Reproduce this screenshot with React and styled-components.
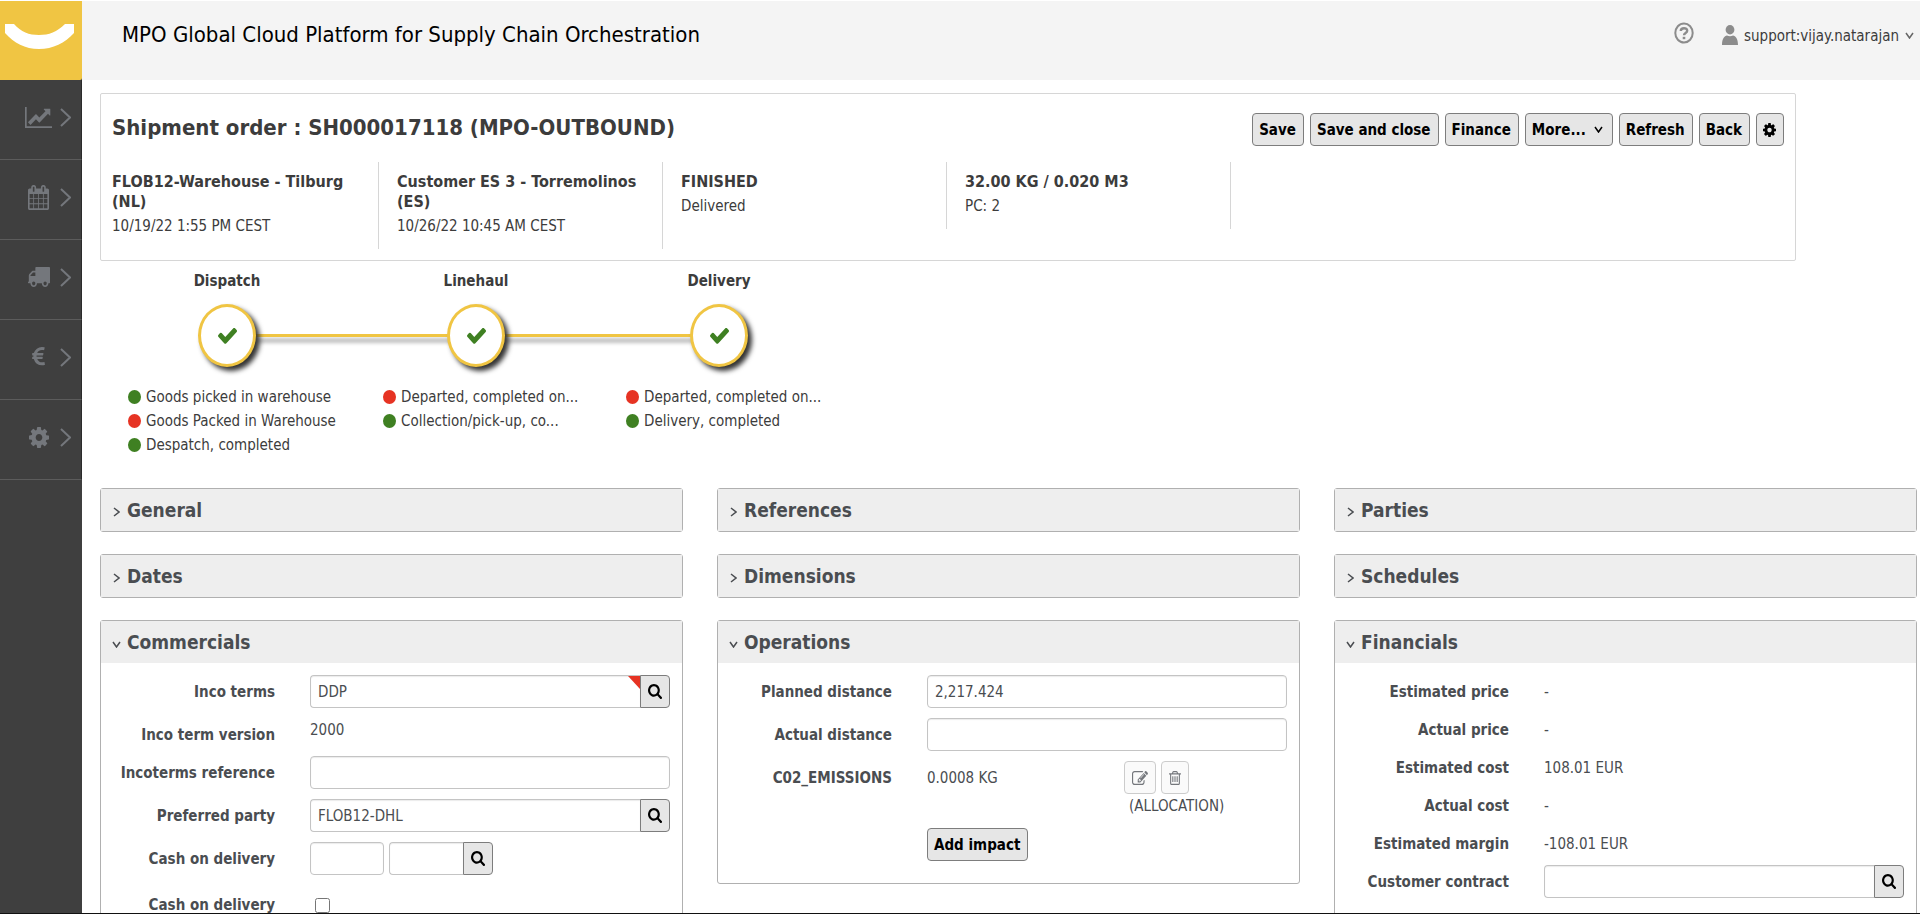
import React, { useState } from "react";
import styled, { createGlobalStyle } from "styled-components";

//FONT AWESOME 4 OUTLINES, EACH WITH THE BOX IT FILLS
const ICONS = {
  chart: {
    box: "0 128 2048 1536",
    d: "M2048 1536v128h-2048v-1536h128v1408h1920zM1920 288v435q0 21-19.5 29.5t-35.5-7.5l-121-121-633 633q-10 10-23 10t-23-10l-233-233-416 416-192-192 585-585q10-10 23-10t23 10l233 233 464-464-121-121q-16-16-7.5-35.5t29.5-19.5h435q14 0 23 9t9 23z",
  },
  calendar: {
    box: "64 0 1664 1792",
    d: "M192 1664h288v-288h-288v288zm352 0h320v-288h-320v288zm-352-352h288v-320h-288v320zm352 0h320v-320h-320v320zm-352-384h288v-288h-288v288zm736 736h320v-288h-320v288zm-384-736h320v-288h-320v288zm768 736h288v-288h-288v288zm-384-352h320v-320h-320v320zm-352-864v-288q0-13-9.5-22.5t-22.5-9.5h-64q-13 0-22.5 9.5t-9.5 22.5v288q0 13 9.5 22.5t22.5 9.5h64q13 0 22.5-9.5t9.5-22.5zm736 864h288v-320h-288v320zm-384-384h320v-288h-320v288zm384 0h288v-288h-288v288zm32-480v-288q0-13-9.5-22.5t-22.5-9.5h-64q-13 0-22.5 9.5t-9.5 22.5v288q0 13 9.5 22.5t22.5 9.5h64q13 0 22.5-9.5t9.5-22.5zm384-64v1280q0 52-38 90t-90 38h-1408q-52 0-90-38t-38-90v-1280q0-52 38-90t90-38h128v-96q0-66 47-113t113-47h64q66 0 113 47t47 113v96h384v-96q0-66 47-113t113-47h64q66 0 113 47t47 113v96h128q52 0 90 38t38 90z",
  },
  truck: {
    box: "64 256 1728 1408",
    d: "M640 1408q0-52-38-90t-90-38-90 38-38 90 38 90 90 38 90-38 38-90zm-384-512h384v-256h-158q-13 0-22 9l-195 195q-9 9-9 22v30zm1280 512q0-52-38-90t-90-38-90 38-38 90 38 90 90 38 90-38 38-90zm256-1088v1024q0 15-4 26.5t-13.5 18.5-16.5 11.5-23.5 6-22.5 2-25.5 0-22.5-.5q0 106-75 181t-181 75-181-75-75-181h-384q0 106-75 181t-181 75-181-75-75-181h-64q-3 0-22.5.5t-25.5 0-22.5-2-23.5-6-16.5-11.5-13.5-18.5-4-26.5q0-26 19-45t45-19v-320q0-8-.5-35t0-38 2.5-34.5 6.5-37 14-30.5 22.5-30l198-198q19-19 50.5-32t58.5-13h160v-192q0-26 19-45t45-19h1024q26 0 45 19t19 45z",
  },
  euro: {
    box: "370 128 1030 1536",
    d: "M1360 1307l35 159q3 12-3 22.5t-17 14.5l-5 1q-4 2-10.5 3.5t-16 4.5-21.5 5.5-25.5 5-30 5-33.5 4.5-36.5 3-38.5 1q-234 0-409-130.5t-238-351.5h-95q-13 0-22.5-9.5t-9.5-22.5v-113q0-13 9.5-22.5t22.5-9.5h66q-2-57 1-105h-67q-14 0-23-9t-9-23v-114q0-14 9-23t23-9h98q67-210 243.5-338t400.5-128q102 0 194 23 11 3 20 15 6 11 3 24l-43 159q-3 13-14 19.5t-24 2.5l-4-1q-4-1-11.5-2.5l-17.5-3.5-22.5-3.5-26-3-29-2.5-29.5-1q-126 0-226 64t-150 176h468q16 0 25 12 10 12 7 26l-24 114q-5 26-32 26h-488q-3 37 0 105h459q15 0 25 12 9 12 6 27l-24 112q-2 11-11 18.5t-20 7.5h-387q48 117 149.5 185.5t228.5 68.5q18 0 36-1.5t33.5-3.5 29.5-4.5 24.5-5 18.5-4.5l12-3 5-2q13-5 26 2 12 7 15 21z",
  },
  cog: {
    box: "128 128 1536 1536",
    d: "M1152 896q0-106-75-181t-181-75-181 75-75 181 75 181 181 75 181-75 75-181zm512-109v222q0 12-8 23t-20 13l-185 28q-19 54-39 91 35 50 107 138 10 12 10 25t-9 23q-27 37-99 108t-94 71q-12 0-26-9l-138-108q-44 23-91 38-16 136-29 186-7 28-36 28h-222q-14 0-24.5-8.5t-11.5-21.5l-28-184q-49-16-90-37l-141 107q-10 9-25 9-14 0-25-11-126-114-165-168-7-10-7-23 0-12 8-23 15-21 51-66.5t54-70.5q-27-50-41-99l-183-27q-13-2-21-12.5t-8-23.5v-222q0-12 8-23t19-13l186-28q14-46 39-92-40-57-107-138-10-12-10-24 0-10 9-23 26-36 98.5-107.5t94.5-71.5q13 0 26 10l138 107q44-23 91-38 16-136 29-186 7-28 36-28h222q14 0 24.5 8.5t11.5 21.5l28 184q49 16 90 37l142-107q9-9 24-9 13 0 25 10 129 119 165 170 7 8 7 22 0 12-8 23-15 21-51 66.5t-54 70.5q26 50 41 98l183 28q13 2 21 12.5t8 23.5z",
  },
  check: {
    box: "121 344 1550 1188",
    d: "M1671 566q0 40-28 68l-724 724-136 136q-28 28-68 28t-68-28l-136-136-362-362q-28-28-28-68t28-68l136-136q28-28 68-28t68 28l294 295 656-657q28-28 68-28t68 28l136 136q28 28 28 68z",
  },
  search: {
    box: "64 128 1664 1664",
    d: "M1216 832q0-185-131.5-316.5t-316.5-131.5-316.5 131.5-131.5 316.5 131.5 316.5 316.5 131.5 316.5-131.5 131.5-316.5zm512 832q0 52-38 90t-90 38q-54 0-90-38l-343-342q-179 124-399 124-143 0-273.5-55.5t-225-150-150-225-55.5-273.5 55.5-273.5 150-225 225-150 273.5-55.5 273.5 55.5 225 150 150 225 55.5 273.5q0 220-124 399l343 343q37 37 37 90z",
  },
  edit: {
    box: "0 128 1792 1408",
    d: "M888 1184l116-116-152-152-116 116v56h96v96h56zm440-720q-16-16-33 1l-350 350q-17 17-1 33t33-1l350-350q17-17 1-33zm80 594v190q0 119-84.5 203.5t-203.5 84.5h-832q-119 0-203.5-84.5t-84.5-203.5v-832q0-119 84.5-203.5t203.5-84.5h832q63 0 117 25 15 7 18 23 3 17-9 29l-49 49q-14 14-32 8-23-6-45-6h-832q-66 0-113 47t-47 113v832q0 66 47 113t113 47h832q66 0 113-47t47-113v-126q0-13 9-22l64-64q15-15 35-7t20 29zm-96-738l288 288-672 672h-288v-288zm444 132l-92 92-288-288 92-92q28-28 68-28t68 28l152 152q28 28 28 68t-28 68z",
  },
  trash: {
    box: "192 128 1408 1536",
    d: "M704 736v576q0 14-9 23t-23 9h-64q-14 0-23-9t-9-23v-576q0-14 9-23t23-9h64q14 0 23 9t9 23zm256 0v576q0 14-9 23t-23 9h-64q-14 0-23-9t-9-23v-576q0-14 9-23t23-9h64q14 0 23 9t9 23zm256 0v576q0 14-9 23t-23 9h-64q-14 0-23-9t-9-23v-576q0-14 9-23t23-9h64q14 0 23 9t9 23zm128 724v-948h-896v948q0 22 7 40.5t14.5 27 10.5 8.5h832q3 0 10.5-8.5t14.5-27 7-40.5zm-672-1076h448l-48-117q-7-9-17-11h-317q-10 2-17 11zm928 32v64q0 14-9 23t-23 9h-96v948q0 83-47 143.5t-113 60.5h-832q-66 0-113-58.5t-47-141.5v-952h-96q-14 0-23-9t-9-23v-64q0-14 9-23t23-9h309l70-167q15-37 54-63t79-26h320q40 0 79 26t54 63l70 167h309q14 0 23 9t9 23z",
  },
};

const Icon = ({ name, w, h }) => (
  <svg width={w} height={h} viewBox={ICONS[name].box} preserveAspectRatio="none" fill="currentColor" aria-hidden="true">
    <path d={ICONS[name].d} />
  </svg>
);

const Chevron = ({ down, w, h, stroke = 1.5 }) => (
  <svg width={w} height={h} viewBox={`0 0 ${w} ${h}`} fill="none" stroke="currentColor" strokeWidth={stroke} aria-hidden="true">
    <path d={down ? `M1 1L${w / 2} ${h - 1}L${w - 1} 1` : `M1 1L${w - 1} ${h / 2}L1 ${h - 1}`} />
  </svg>
);

const NAV = [
  { icon: "chart", label: "Analytics", w: 27, h: 21 },
  { icon: "calendar", label: "Planning", w: 21, h: 25 },
  { icon: "truck", label: "Transport", w: 22, h: 20 },
  { icon: "euro", label: "Finance", w: 13, h: 20 },
  { icon: "cog", label: "Settings", w: 20, h: 21 },
];

const SUMMARY = [
  { title: "FLOB12-Warehouse - Tilburg (NL)", sub: "10/19/22 1:55 PM CEST" },
  { title: "Customer ES 3 - Torremolinos (ES)", sub: "10/26/22 10:45 AM CEST" },
  { title: "FINISHED", sub: "Delivered" },
  { title: "32.00 KG / 0.020 M3", sub: "PC: 2" },
];

const STAGES = [
  {
    name: "Dispatch",
    events: [
      { text: "Goods picked in warehouse" },
      { text: "Goods Packed in Warehouse", late: true },
      { text: "Despatch, completed" },
    ],
  },
  {
    name: "Linehaul",
    events: [
      { text: "Departed, completed on...", late: true },
      { text: "Collection/pick-up, co..." },
    ],
  },
  {
    name: "Delivery",
    events: [
      { text: "Departed, completed on...", late: true },
      { text: "Delivery, completed" },
    ],
  },
];

const Panel = ({ title, defaultOpen = false, children }) => {
  const [open, setOpen] = useState(defaultOpen);
  return (
    <PanelBox>
      <PanelHeading>
        <PanelToggle type="button" aria-expanded={open} onClick={() => setOpen(!open)}>
          <PanelArrow>
            {open ? <Chevron down w={9} h={7} /> : <Chevron w={7} h={10} />}
          </PanelArrow>
          {title}
        </PanelToggle>
      </PanelHeading>
      {open && <PanelBody>{children}</PanelBody>}
    </PanelBox>
  );
};

const Lookup = ({ id, value = "", label, changed, small }) => (
  <LookupGroup $small={small}>
    <LookupInput id={id} aria-label={label} defaultValue={value} />
    {changed && <ChangedMark />}
    <LookupButton type="button" aria-label="Search">
      <Icon name="search" w={14} h={15} />
    </LookupButton>
  </LookupGroup>
);

const TextRow = ({ label, value }) => (
  <Row>
    <RowLabel as="span">{label}</RowLabel>
    <Value>{value}</Value>
  </Row>
);

const App = () => {
  return (
    <Page>
      <GlobalStyle />
      <Sidebar>
        <Logo href="#" aria-label="Home">
          <svg width="82" height="79" viewBox="0 1 82 79" aria-hidden="true">
            <path d="M5 24H14C21 32 29 35 39 35S57 32 65 24H74V33C65 43 53 49 39 49S14 43 5 33Z" fill="#fff" />
          </svg>
        </Logo>
        <nav>
          {NAV.map((item) => (
            <NavItem key={item.icon} type="button" aria-label={item.label}>
              <NavIcon><Icon name={item.icon} w={item.w} h={item.h} /></NavIcon>
              <Chevron w={11} h={19} stroke={2} />
            </NavItem>
          ))}
        </nav>
      </Sidebar>

      <Main>
        <TopBar>
          <AppTitle>MPO Global Cloud Platform for Supply Chain Orchestration</AppTitle>
          <TopActions>
            <HelpButton type="button" aria-label="Help">
              <svg width="20" height="22" viewBox="0 0 20 22" fill="none" stroke="currentColor" aria-hidden="true">
                <ellipse cx="10" cy="11" rx="8.7" ry="9.6" strokeWidth="2" />
                <path d="M6.8 9C6.8 5.3 13.2 5.3 13.2 8.7C13.2 11 10 10.8 10 13.2" strokeWidth="2.4" />
                <path d="M8.7 14.8H11.3V17.2H8.7Z" fill="currentColor" stroke="none" />
              </svg>
            </HelpButton>
            <UserMenu type="button">
              <svg width="16" height="20" viewBox="0 0 16 20" aria-hidden="true">
                <ellipse cx="8" cy="4.7" rx="4.4" ry="4.7" fill="#8c8c8c" />
                <path d="M0 20C0 13.500 2.500 11 5 10.600Q8 12 11 10.600C13.500 11 16 13.500 16 20Z" fill="#8c8c8c" />
              </svg>
              <UserName>support:vijay.natarajan</UserName>
              <Chevron down w={9} h={7} />
            </UserMenu>
          </TopActions>
        </TopBar>

        <Content>
          <Card>
            <CardTop>
              <CardTitle>Shipment order : SH000017118 (MPO-OUTBOUND)</CardTitle>
              <Toolbar>
                <Button type="button">Save</Button>
                <Button type="button">Save and close</Button>
                <Button type="button">Finance</Button>
                <Button type="button" $wide>More... <Chevron down w={9} h={7} /></Button>
                <Button type="button">Refresh</Button>
                <Button type="button">Back</Button>
                <Button type="button" aria-label="Settings"><Icon name="cog" w={13} h={14} /></Button>
              </Toolbar>
            </CardTop>
            <Summary>
              {SUMMARY.map((cell) => (
                <SummaryCell key={cell.title}>
                  <SummaryTitle>{cell.title}</SummaryTitle>
                  <SummaryText>{cell.sub}</SummaryText>
                </SummaryCell>
              ))}
            </Summary>
          </Card>

          <Timeline>
            {STAGES.map((stage) => (
              <Stage key={stage.name}>
                <StageName>{stage.name}</StageName>
                <StageTrack>
                  <StageCircle><Icon name="check" w={19} h={16} /></StageCircle>
                </StageTrack>
                <Events>
                  {stage.events.map((ev) => (
                    <Event key={ev.text}><Dot $late={ev.late} />{ev.text}</Event>
                  ))}
                </Events>
              </Stage>
            ))}
          </Timeline>

          <Panels>
            <PanelColumn>
              <Panel title="General" />
              <Panel title="Dates" />
              <Panel title="Commercials" defaultOpen>
                <Row>
                  <RowLabel htmlFor="inco-terms">Inco terms</RowLabel>
                  <Lookup id="inco-terms" value="DDP" changed />
                </Row>
                <Row>
                  <RowLabel as="span">Inco term version</RowLabel>
                  <Value $top>2000</Value>
                </Row>
                <Row>
                  <RowLabel htmlFor="inco-ref">Incoterms reference</RowLabel>
                  <Input id="inco-ref" />
                </Row>
                <Row>
                  <RowLabel htmlFor="party">Preferred party</RowLabel>
                  <Lookup id="party" value="FLOB12-DHL" />
                </Row>
                <Row>
                  <RowLabel htmlFor="cod-amount">Cash on delivery</RowLabel>
                  <Pair>
                    <Input id="cod-amount" $short />
                    <Lookup label="Cash on delivery currency" small />
                  </Pair>
                </Row>
                <Row>
                  <RowLabel htmlFor="cod" $low>Cash on delivery</RowLabel>
                  <Checkbox id="cod" type="checkbox" />
                </Row>
              </Panel>
            </PanelColumn>

            <PanelColumn>
              <Panel title="References" />
              <Panel title="Dimensions" />
              <Panel title="Operations" defaultOpen>
                <Row>
                  <RowLabel htmlFor="planned">Planned distance</RowLabel>
                  <Input id="planned" defaultValue="2,217.424" />
                </Row>
                <Row>
                  <RowLabel htmlFor="actual">Actual distance</RowLabel>
                  <Input id="actual" />
                </Row>
                <Row>
                  <RowLabel as="span">C02_EMISSIONS</RowLabel>
                  <Impact>
                    <Value>0.0008 KG</Value>
                    <div>
                      <ImpactActions>
                        <GhostButton type="button" aria-label="Edit impact"><Icon name="edit" w={16} h={14} /></GhostButton>
                        <GhostButton type="button" aria-label="Delete impact"><Icon name="trash" w={12} h={14} /></GhostButton>
                      </ImpactActions>
                      <ImpactNote>(ALLOCATION)</ImpactNote>
                    </div>
                  </Impact>
                </Row>
                <Row>
                  <span />
                  <div><Button type="button">Add impact</Button></div>
                </Row>
              </Panel>
            </PanelColumn>

            <PanelColumn>
              <Panel title="Parties" />
              <Panel title="Schedules" />
              <Panel title="Financials" defaultOpen>
                <TextRow label="Estimated price" value="-" />
                <TextRow label="Actual price" value="-" />
                <TextRow label="Estimated cost" value="108.01 EUR" />
                <TextRow label="Actual cost" value="-" />
                <TextRow label="Estimated margin" value="-108.01 EUR" />
                <Row>
                  <RowLabel htmlFor="contract">Customer contract</RowLabel>
                  <Lookup id="contract" />
                </Row>
              </Panel>
            </PanelColumn>
          </Panels>
        </Content>
      </Main>
    </Page>
  );
};

export default App;

const GlobalStyle = createGlobalStyle`
  * {
    box-sizing: border-box;
  }
  body {
    margin: 0;
    background: #fff;
    color: #3c3c3c;
  }
  body, button, input {
    font-family: "DejaVu Sans Condensed", Tahoma, "DejaVu Sans", sans-serif;
    font-size: 15px;
    line-height: 24px;
  }
  svg {
    display: block;
    flex: none;
  }
`

const Page = styled.div`
  display: flex;
  height: 100vh;
  overflow: hidden;
  padding-top: 1px;
  border-bottom: 1px solid #111;
`

const Sidebar = styled.aside`
  flex: none;
  width: 82px;
  background: #3f3f3f;
`

const Logo = styled.a`
  display: block;
  background: #f0c543;
  border-bottom-right-radius: 2px;
`

const NavItem = styled.button`
  display: flex;
  align-items: center;
  gap: 8px;
  width: 100%;
  height: 80px;
  padding: 0 0 5px 25px;
  background: none;
  border: 0;
  border-bottom: 1px solid #5c5c5c;
  border-right: 1px solid #2b2b2b;
  color: #74777c;
  cursor: pointer;
`

const NavIcon = styled.span`
  display: flex;
  justify-content: center;
  width: 27px;
`

const Main = styled.div`
  flex: 1;
  min-width: 0;
`

const TopBar = styled.header`
  display: flex;
  justify-content: space-between;
  height: 79px;
  padding: 18px 6px 0 40px;
  background: #f4f4f4;
`

const AppTitle = styled.h1`
  margin: 0;
  color: #000;
  font-size: 22px;
  font-weight: 400;
  line-height: 32px;
`

const TopActions = styled.div`
  display: flex;
  align-items: center;
  gap: 28px;
  height: 32px;
`

const HelpButton = styled.button`
  padding: 0 0 4px;
  background: none;
  border: 0;
  color: #8c8c8c;
`

const UserMenu = styled.button`
  display: flex;
  align-items: center;
  gap: 6px;
  padding: 0;
  background: none;
  border: 0;
  color: #666;
`

const UserName = styled.span`
  padding-top: 2px;
  color: #3c3c3c;
`

const Content = styled.main`
  padding: 13px 3px 0 18px;
`

const Card = styled.section`
  margin-right: 121px;
  padding: 19px 11px 11px;
  border: 1px solid #d6d6d6;
  border-radius: 2px;
`

const CardTop = styled.div`
  display: flex;
  justify-content: space-between;
`

const CardTitle = styled.h2`
  margin: 0;
  font-size: 22px;
  line-height: 30px;
`

const Toolbar = styled.div`
  display: flex;
  gap: 6px;
`

const Button = styled.button`
  display: flex;
  align-items: center;
  gap: 8px;
  height: 33px;
  padding: 0 ${(props) => (props.$wide ? "9px" : "7px")} 0 6px;
  background: #e6e6e6;
  border: 1px solid #7d7d7d;
  border-radius: 4px;
  color: #000;
  font-weight: 700;
  cursor: pointer;
`

const Summary = styled.div`
  display: flex;
  align-items: flex-start;
  margin-top: 16px;
`

const SummaryCell = styled.div`
  width: 284px;
  padding: 10px 14px 11px 18px;
  border-right: 1px solid #d6d6d6;
  &:first-child {
    width: 267px;
    padding-left: 0;
  }
`

const SummaryTitle = styled.div`
  font-size: 16px;
  font-weight: 700;
  line-height: 20px;
`

const SummaryText = styled.div`
  margin-top: 2px;
`

const Timeline = styled.section`
  display: grid;
  grid-template-columns: 198px 186px 186px;
  column-gap: 57px;
  padding: 8px 0 0 28px;
`

const StageName = styled.div`
  font-weight: 700;
  text-align: center;
`

const StageTrack = styled.div`
  position: relative;
  display: flex;
  justify-content: center;
  margin-top: 11px;
`

const StageCircle = styled.div`
  position: relative;
  z-index: 1;
  display: flex;
  align-items: center;
  justify-content: center;
  width: 58px;
  height: 63px;
  background: #fff;
  border: 3px solid #f0c543;
  border-radius: 50%;
  box-shadow: 4px 4px 5px #333;
  color: #3f8022;
`

//THE LINE RUNS BEHIND THE CIRCLES TO THE NEXT STAGE
const Stage = styled.div`
  &:not(:last-child) ${StageTrack}::after {
    content: "";
    position: absolute;
    top: 30px;
    left: 50%;
    width: calc(100% + 55px);
    height: 3px;
    background: #f0c543;
    box-shadow: 0 5px 4px rgba(0, 0, 0, 0.4);
  }
`

const Events = styled.ul`
  height: 72px;
  margin: 18px 0 0;
  padding: 0;
  list-style: none;
`

const Event = styled.li`
  display: flex;
  align-items: center;
  gap: 5px;
  white-space: nowrap;
`

const Dot = styled.span`
  flex: none;
  width: 13px;
  height: 14px;
  border-radius: 50%;
  background: ${(props) => (props.$late ? "#e63323" : "#3f8022")};
`

const Panels = styled.div`
  display: grid;
  grid-template-columns: repeat(3, 1fr);
  column-gap: 34px;
  margin-top: 31px;
  color: #4a4d51;
`

const PanelColumn = styled.div`
  display: flex;
  flex-direction: column;
  gap: 22px;
`

const PanelBox = styled.section`
  border: 1px solid #b0b0b0;
  border-radius: 3px;
`

const PanelHeading = styled.h3`
  margin: 0;
`

const PanelToggle = styled.button`
  display: flex;
  align-items: center;
  gap: 5px;
  width: 100%;
  height: 42px;
  padding: 0 10px;
  background: #eee;
  border: 0;
  color: #4a4d51;
  font-size: 19px;
  font-weight: 700;
  cursor: pointer;
`

const PanelArrow = styled.span`
  display: flex;
  justify-content: center;
  width: 11px;
  padding-top: 4px;
`

const PanelBody = styled.div`
  display: flex;
  flex-direction: column;
  gap: 10px;
  padding: 12px 12px 22px 0;
`

const Row = styled.div`
  display: grid;
  grid-template-columns: 174px 1fr;
  column-gap: 35px;
  align-items: start;
  min-height: 28px;
`

const RowLabel = styled.label`
  padding-top: ${(props) => (props.$low ? "8px" : "5px")};
  margin-bottom: -5px;
  font-weight: 700;
  text-align: right;
`

const Value = styled.span`
  padding-top: ${(props) => (props.$top ? "0" : "5px")};
  margin-bottom: -5px;
`

const Input = styled.input`
  width: ${(props) => (props.$short ? "74px" : "100%")};
  height: 33px;
  padding: 0 7px;
  background: #fff;
  border: 1px solid #c4c4c4;
  border-radius: 4px;
  box-shadow: inset 0 1px 1px rgba(0, 0, 0, 0.08);
  color: #4a4d51;
`

const LookupGroup = styled.div`
  position: relative;
  display: flex;
  width: ${(props) => (props.$small ? "104px" : "100%")};
`

const LookupInput = styled(Input)`
  flex: 1;
  min-width: 0;
  border-right: 0;
  border-radius: 4px 0 0 4px;
`

const LookupButton = styled.button`
  display: flex;
  align-items: center;
  justify-content: center;
  width: 30px;
  padding: 0;
  background: #e6e6e6;
  border: 1px solid #7d7d7d;
  border-radius: 0 4px 4px 0;
  color: #000;
  cursor: pointer;
`

const ChangedMark = styled.span`
  position: absolute;
  top: 1px;
  right: 30px;
  width: 12px;
  height: 13px;
  background: #e63323;
  clip-path: polygon(0 0, 100% 0, 100% 100%);
`

const Pair = styled.div`
  display: flex;
  gap: 5px;
`

const Checkbox = styled.input`
  width: 15px;
  height: 15px;
  margin: 13px 0 0 5px;
`

const Impact = styled.div`
  display: grid;
  grid-template-columns: 197px 1fr;
`

const ImpactActions = styled.div`
  display: flex;
  gap: 5px;
`

const GhostButton = styled.button`
  display: flex;
  align-items: center;
  height: 33px;
  padding: 0 7px;
  background: #fafafa;
  border: 1px solid #ccc;
  border-radius: 4px;
  color: #74777c;
  cursor: pointer;
`

const ImpactNote = styled.div`
  padding-left: 5px;
`
